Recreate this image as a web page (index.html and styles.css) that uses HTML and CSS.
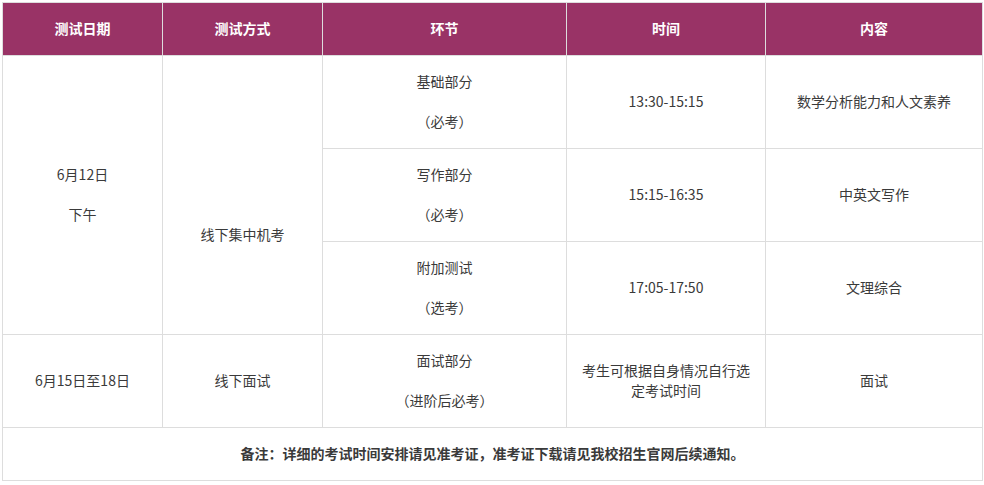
FILE: index.html
```html
<!DOCTYPE html>
<html lang="zh">
<head>
<meta charset="utf-8">
<title>测试安排</title>
<link rel="stylesheet" href="styles.css">
</head>
<body>
<div class="wrap">
<table class="schedule">
  <colgroup>
    <col class="c1"><col class="c2"><col class="c3"><col class="c4"><col class="c5">
  </colgroup>
  <thead>
    <tr class="head">
      <th>测试日期</th>
      <th>测试方式</th>
      <th>环节</th>
      <th>时间</th>
      <th>内容</th>
    </tr>
  </thead>
  <tbody>
    <tr class="row">
      <td rowspan="3"><div class="stack"><span>6月12日</span><span>下午</span></div></td>
      <td rowspan="3"><span class="offset">线下集中机考</span></td>
      <td><div class="stack"><span>基础部分</span><span>（必考）</span></div></td>
      <td>13:30-15:15</td>
      <td>数学分析能力和人文素养</td>
    </tr>
    <tr class="row">
      <td><div class="stack"><span>写作部分</span><span>（必考）</span></div></td>
      <td>15:15-16:35</td>
      <td>中英文写作</td>
    </tr>
    <tr class="row">
      <td><div class="stack"><span>附加测试</span><span>（选考）</span></div></td>
      <td>17:05-17:50</td>
      <td>文理综合</td>
    </tr>
    <tr class="row">
      <td>6月15日至18日</td>
      <td>线下面试</td>
      <td><div class="stack"><span>面试部分</span><span>（进阶后必考）</span></div></td>
      <td class="wrapcell">考生可根据自身情况自行选定考试时间</td>
      <td>面试</td>
    </tr>
    <tr class="note">
      <td colspan="5">备注：详细的考试时间安排请见准考证，准考证下载请见我校招生官网后续通知。</td>
    </tr>
  </tbody>
</table>
</div>
</body>
</html>
```
FILE: styles.css
```css
html, body {
  margin: 0;
  padding: 0;
  background: #ffffff;
}

.wrap {
  padding: 2px 0 0 2px;
}

.schedule {
  border-collapse: collapse;
  table-layout: fixed;
  width: 980px;
  font-family: "Microsoft YaHei", "Noto Sans CJK SC", "Noto Sans", sans-serif;
  font-size: 14px;
  line-height: 20px;
  color: #3a3a3a;
}

.c1 { width: 160px; }
.c2 { width: 160px; }
.c3 { width: 244px; }
.c4 { width: 199px; }
.c5 { width: 217px; }

.schedule th,
.schedule td {
  border: 1px solid #dddddd;
  text-align: center;
  vertical-align: middle;
  padding: 0 10px 2px;
}

.head {
  height: 53px;
}

.head th {
  background: #993366;
  color: #ffffff;
  font-weight: bold;
}

.row {
  height: 93px;
}

.note {
  height: 53px;
}

.note td {
  font-weight: bold;
}

.stack {
  display: flex;
  flex-direction: column;
  align-items: center;
  gap: 20px;
}

.offset {
  display: block;
  padding-top: 80px;
}
```
